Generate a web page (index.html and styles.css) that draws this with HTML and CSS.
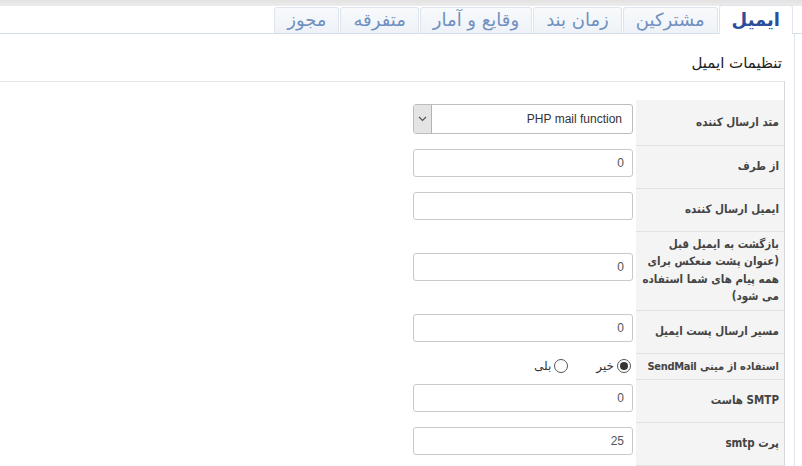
FILE: index.html
```html
<!DOCTYPE html>
<html lang="fa" dir="rtl">

<head>
    <meta charset="UTF-8">
    <title>تنظیمات ایمیل</title>
    <link rel="stylesheet" href="styles.css">
</head>

<body>
    <div class="topbar"></div>

    <div class="tabs">
        <a class="tab active" href="#">ایمیل</a>
        <a class="tab" href="#">مشترکین</a>
        <a class="tab" href="#">زمان بند</a>
        <a class="tab" href="#">وقایع و آمار</a>
        <a class="tab" href="#">متفرقه</a>
        <a class="tab" href="#">مجوز</a>
    </div>

    <div class="panel">
        <h3>تنظیمات ایمیل</h3>

        <div class="box">
            <table class="settings">
                <tr>
                    <td class="label">متد ارسال کننده</td>
                    <td class="field">
                        <div class="select_wrap">
                            <select>
                                <option>PHP mail function</option>
                                <option>SMTP</option>
                                <option>SendMail</option>
                            </select>
                            <span class="arrow">
                                <svg width="9" height="6" viewBox="0 0 9 6"><path d="M1 1l3.5 3.5L8 1" fill="none" stroke="#555" stroke-width="1.2"/></svg>
                            </span>
                        </div>
                    </td>
                </tr>
                <tr>
                    <td class="label">از طرف</td>
                    <td class="field"><input type="text" value="0"></td>
                </tr>
                <tr>
                    <td class="label">ایمیل ارسال کننده</td>
                    <td class="field"><input type="text" value=""></td>
                </tr>
                <tr>
                    <td class="label">بازگشت به ایمیل قبل (عنوان پشت منعکس برای همه پیام های شما استفاده می شود)</td>
                    <td class="field"><input type="text" value="0"></td>
                </tr>
                <tr>
                    <td class="label">مسیر ارسال پست ایمیل</td>
                    <td class="field"><input type="text" value="0"></td>
                </tr>
                <tr class="radio_row">
                    <td class="label nowrap">استفاده از مینی SendMail</td>
                    <td class="field">
                        <div class="radios">
                            <label class="radio"><span class="dot checked"></span>خیر</label>
                            <label class="radio"><span class="dot"></span>بلی</label>
                        </div>
                    </td>
                </tr>
                <tr>
                    <td class="label">SMTP هاست</td>
                    <td class="field"><input type="text" value="0"></td>
                </tr>
                <tr>
                    <td class="label">پرت smtp</td>
                    <td class="field"><input type="text" value="25"></td>
                </tr>
            </table>
        </div>
    </div>
</body>

</html>
```

FILE: styles.css
```css
body {
    margin: 0;
    font-family: "DejaVu Sans", sans-serif;
    background-color: #fff;
    color: #333;
}

.topbar {
    height: 6px;
    background: linear-gradient(#e2e2e2, #ececec);
}

.tabs {
    display: flex;
    align-items: flex-end;
    gap: 1px;
    height: 27px;
    padding-right: 9px;
    border-bottom: 1px solid #d3deeb;
}

.tab {
    height: 25px;
    line-height: 24px;
    padding: 0 12px;
    font-size: 18px;
    color: #7090c0;
    text-decoration: none;
    background: linear-gradient(#f8fafc, #eef2f7);
    border: 1px solid #dfe5ec;
    border-bottom: none;
    border-radius: 3px 3px 0 0;
}

.tab.active {
    height: 28px;
    line-height: 28px;
    margin-bottom: -1px;
    font-weight: bold;
    color: #2c4d9c;
    background: #fff;
}

.panel {
    margin-right: 7px;
    border-right: 1px solid #dfe5ec;
    height: 432px;
}

.panel h3 {
    margin: 0;
    padding: 19px 12px 8px 0;
    font-size: 15px;
    font-weight: normal;
    line-height: 20px;
    color: #222;
}

.box {
    margin-right: 9px;
    padding-top: 18px;
    border-top: 1px solid #e3e3e3;
    border-right: 1px solid #d8d8d8;
}

.settings {
    width: 100%;
    border-collapse: collapse;
    table-layout: fixed;
}

.settings .label {
    width: 138px;
    padding: 4px 5px;
    background-color: #f4f4f4;
    border-bottom: 1px solid #e2e2e2;
    font-family: "DejaVu Sans Condensed", "DejaVu Sans", sans-serif;
    font-size: 11.5px;
    font-weight: bold;
    line-height: 17.5px;
    color: #444;
    vertical-align: middle;
}

.settings .label.nowrap {
    white-space: nowrap;
    font-size: 11px;
    letter-spacing: -0.3px;
}

.settings .field {
    padding: 4px 3px 11px 0;
    vertical-align: middle;
}

.settings input {
    display: block;
    box-sizing: border-box;
    width: 220px;
    height: 28px;
    padding: 0 8px;
    border: 1px solid #c9c9c9;
    border-radius: 3px;
    font-family: "Liberation Sans", Arial, sans-serif;
    font-size: 12px;
    color: #555;
    text-align: right;
}

.select_wrap {
    position: relative;
    width: 220px;
    height: 30px;
}

.select_wrap select {
    appearance: none;
    box-sizing: border-box;
    width: 100%;
    height: 100%;
    padding: 0 10px 0 25px;
    border: 1px solid #bdbdbd;
    border-radius: 3px;
    background: #fff;
    font-family: "Liberation Sans", Arial, sans-serif;
    font-size: 12px;
    color: #333;
}

.arrow {
    position: absolute;
    left: 1px;
    top: 1px;
    bottom: 1px;
    width: 17px;
    display: flex;
    align-items: center;
    justify-content: center;
    background: #e4e4e4;
    border-right: 1px solid #b3b3b3;
}

.radio_row .field {
    padding: 6px 3px 6px 0;
}

.radios {
    display: flex;
    gap: 28px;
    margin-right: 2px;
}

.radio {
    display: flex;
    align-items: center;
    gap: 3px;
    font-size: 12px;
    color: #333;
}

.dot {
    box-sizing: border-box;
    width: 14px;
    height: 14px;
    border: 1px solid #555;
    border-radius: 50%;
    display: flex;
    align-items: center;
    justify-content: center;
}

.dot.checked::after {
    content: "";
    width: 8px;
    height: 8px;
    border-radius: 50%;
    background: #333;
}
```
